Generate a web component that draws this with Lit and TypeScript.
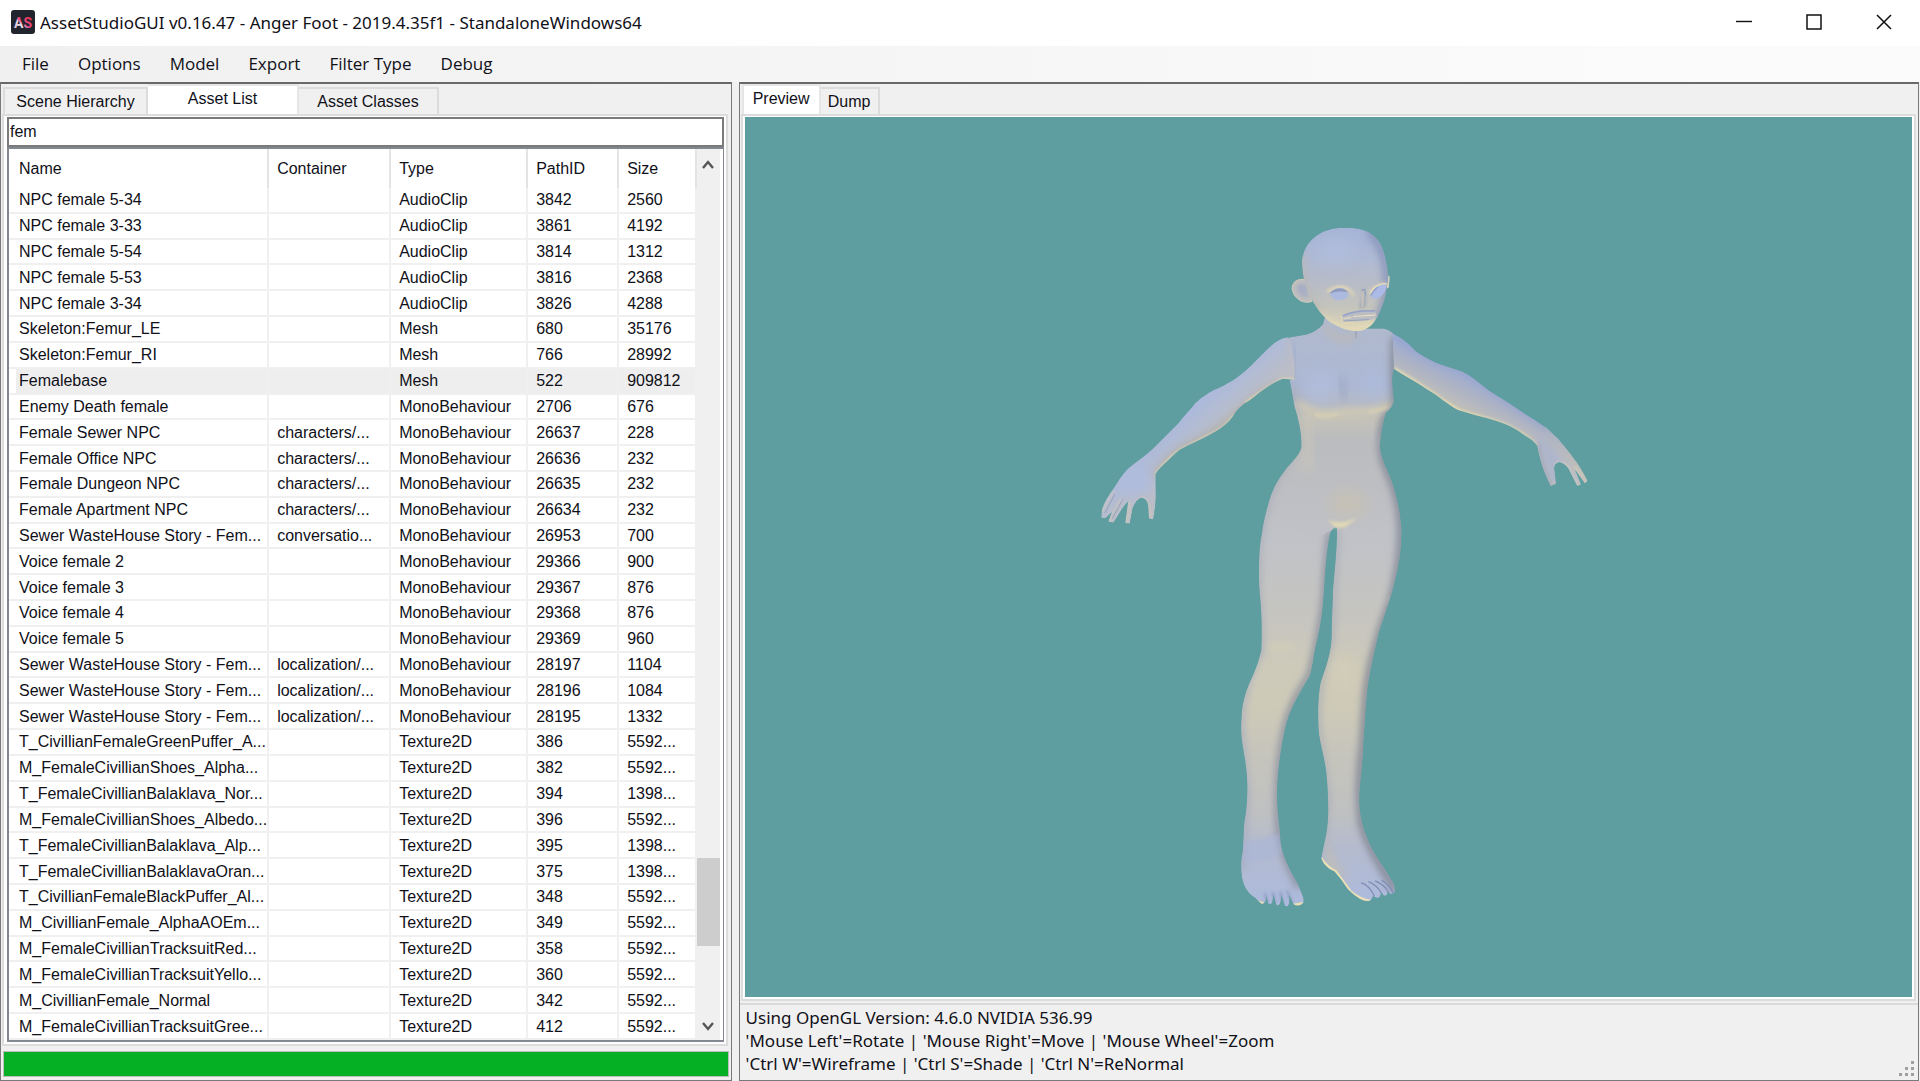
import { LitElement, html, css, svg } from "lit";
import { customElement, state } from "lit/decorators.js";
import { classMap } from "lit/directives/class-map.js";

type Asset = [name: string, container: string, type: string, pathId: string, size: string];

const MONO = "MonoBehaviour";
const ASSETS: Asset[] = [
  ["NPC female 5-34", "", "AudioClip", "3842", "2560"],
  ["NPC female 3-33", "", "AudioClip", "3861", "4192"],
  ["NPC female 5-54", "", "AudioClip", "3814", "1312"],
  ["NPC female 5-53", "", "AudioClip", "3816", "2368"],
  ["NPC female 3-34", "", "AudioClip", "3826", "4288"],
  ["Skeleton:Femur_LE", "", "Mesh", "680", "35176"],
  ["Skeleton:Femur_RI", "", "Mesh", "766", "28992"],
  ["Femalebase", "", "Mesh", "522", "909812"],
  ["Enemy Death female", "", MONO, "2706", "676"],
  ["Female Sewer NPC", "characters/...", MONO, "26637", "228"],
  ["Female Office NPC", "characters/...", MONO, "26636", "232"],
  ["Female Dungeon NPC", "characters/...", MONO, "26635", "232"],
  ["Female Apartment NPC", "characters/...", MONO, "26634", "232"],
  ["Sewer WasteHouse Story - Fem...", "conversatio...", MONO, "26953", "700"],
  ["Voice female 2", "", MONO, "29366", "900"],
  ["Voice female 3", "", MONO, "29367", "876"],
  ["Voice female 4", "", MONO, "29368", "876"],
  ["Voice female 5", "", MONO, "29369", "960"],
  ["Sewer WasteHouse Story - Fem...", "localization/...", MONO, "28197", "1104"],
  ["Sewer WasteHouse Story - Fem...", "localization/...", MONO, "28196", "1084"],
  ["Sewer WasteHouse Story - Fem...", "localization/...", MONO, "28195", "1332"],
  ["T_CivillianFemaleGreenPuffer_A...", "", "Texture2D", "386", "5592..."],
  ["M_FemaleCivillianShoes_Alpha...", "", "Texture2D", "382", "5592..."],
  ["T_FemaleCivillianBalaklava_Nor...", "", "Texture2D", "394", "1398..."],
  ["M_FemaleCivillianShoes_Albedo...", "", "Texture2D", "396", "5592..."],
  ["T_FemaleCivillianBalaklava_Alp...", "", "Texture2D", "395", "1398..."],
  ["T_FemaleCivillianBalaklavaOran...", "", "Texture2D", "375", "1398..."],
  ["T_CivillianFemaleBlackPuffer_Al...", "", "Texture2D", "348", "5592..."],
  ["M_CivillianFemale_AlphaAOEm...", "", "Texture2D", "349", "5592..."],
  ["M_FemaleCivillianTracksuitRed...", "", "Texture2D", "358", "5592..."],
  ["M_FemaleCivillianTracksuitYello...", "", "Texture2D", "360", "5592..."],
  ["M_CivillianFemale_Normal", "", "Texture2D", "342", "5592..."],
  ["M_FemaleCivillianTracksuitGree...", "", "Texture2D", "412", "5592..."],
];

/* Outlines of the mesh, one closed path for each shaded part. */
const HEAD =
  "M667 150C672 118 685 98 700 85C728 60 762 52 800 53C835 53 860 60 880 75C905 95 912 122 918 150C926 180 926 215 919 245C915 275 903 300 892 322C880 345 862 360 840 362C820 364 800 360 780 351C760 343 745 333 732 318C715 300 703 282 694 262C680 240 668 205 667 150Z";
const TORSO =
  "M735 322L730 342Q710 364 680 373L615 384Q640 430 645 505L630 509Q638 550 645 590Q668 660 665 712C658 738 632 757 616 780C596 806 584 828 577 848C570 868 566 884 562 900L700 990L765 952L900 960L960 912C953 865 938 810 920 775C905 740 900 720 901 700C904 670 908 640 918 608Q940 590 942 570Q938 540 937 500L942 475L942 372Q930 358 910 355L860 355L828 362L800 330Z";
const LEFT_LEG =
  "M577 848C563 885 552 930 546 975C538 1010 537 1080 539 1130C546 1200 548 1260 545 1320C535 1360 522 1390 512 1412C495 1450 487 1485 486 1520C480 1580 494 1620 498 1660C504 1700 504 1740 502 1770C500 1810 494 1830 493 1850L490 1920C483 1950 483 1990 490 2012C496 2035 510 2050 525 2060L545 2078Q562 2080 560 2055L566 2078Q580 2088 581 2050L590 2082Q606 2090 604 2050L616 2086Q634 2090 628 2052L642 2080Q660 2090 672 2073C674 2060 665 2045 655 2020C635 1985 620 1960 608 1920C600 1890 602 1860 598 1840C594 1800 590 1760 593 1720C595 1680 600 1640 606 1605C612 1570 618 1540 628 1512C645 1470 670 1430 690 1395C700 1365 700 1340 708 1305C722 1250 730 1200 734 1120C738 1060 742 1010 752 965L765 950L780 850Z";
const RIGHT_LEG =
  "M772 955C772 1030 762 1100 760 1140C758 1200 756 1240 756 1275C755 1330 735 1380 723 1415C714 1460 714 1530 718 1570C724 1610 734 1640 739 1680C746 1740 746 1800 745 1820C743 1870 730 1910 725 1942Q735 1970 765 1982Q785 2005 805 2035Q830 2060 850 2068Q875 2076 880 2055L888 2060Q902 2066 904 2045L912 2054Q924 2058 924 2040L932 2050L944 2046Q948 2030 940 2015C920 1980 890 1940 870 1900C858 1870 850 1855 846 1830C836 1790 838 1760 840 1730C845 1680 850 1640 851 1590C856 1540 856 1500 861 1455C865 1400 885 1320 896 1270C915 1210 935 1160 948 1100C960 1050 966 1000 965 960C963 920 955 880 944 845L765 850L765 945Z";
const LEFT_ARM =
  "M625 381C600 383 580 400 563 417L515 465C490 490 460 512 440 521C420 533 402 538 390 546C370 560 350 572 338 590C325 605 310 620 295 640L220 715C195 738 165 758 145 776C128 792 115 815 104 832C88 852 72 880 67 900L65 922L78 923L97 905L86 934L102 937L125 900Q138 880 146 873L137 938L151 940L160 892Q170 868 184 862Q202 862 206 885L208 924L221 927Q230 880 229 850L228 790C240 772 252 762 265 750Q285 730 300 718C330 702 370 685 410 662Q440 645 460 618Q475 590 510 570C540 545 580 515 610 505L645 508C648 460 642 420 625 381Z";
const RIGHT_ARM =
  "M938 370C960 380 980 395 990 405C1010 428 1040 445 1080 462C1105 470 1130 478 1150 485C1175 498 1190 512 1205 523C1230 545 1260 560 1290 580C1325 605 1360 625 1390 646C1410 658 1420 672 1435 685C1450 705 1468 722 1480 742Q1500 765 1523 812L1515 819L1484 776L1503 822L1492 827L1466 775Q1450 755 1437 755Q1420 760 1423 778L1428 820L1412 827Q1390 780 1382 750Q1375 725 1372 705Q1355 685 1335 675C1300 650 1280 642 1250 632C1210 620 1170 610 1135 599C1100 580 1080 560 1050 542C1020 520 980 500 942 475Z";
const EAR = "M688 212Q665 202 648 213Q632 228 640 245Q645 262 668 274Q685 278 697 273Z";

/* The hip contours run through both the torso and the legs, so their shading is shared. */
const HIP_RIGHT = "M906 690Q904 745 928 790C975 900 975 1010 935 1170";
const HIP_LEFT = "M663 705Q590 790 568 870C540 950 530 1030 540 1200";

const figure = svg`
  <defs>
    <linearGradient id="gHead" x1="0" y1="0" x2="0" y2="1">
      <stop offset="0" stop-color="#a6b4d8"/><stop offset=".3" stop-color="#afbad4"/>
      <stop offset=".55" stop-color="#b8bcc6"/><stop offset=".78" stop-color="#c6c5bc"/><stop offset="1" stop-color="#ded6b6"/>
    </linearGradient>
    <linearGradient id="gTorso" gradientUnits="userSpaceOnUse" x1="0" y1="340" x2="0" y2="960">
      <stop offset="0" stop-color="#b0b9cd"/><stop offset=".3" stop-color="#adb8d3"/><stop offset=".4" stop-color="#b6bbc5"/>
      <stop offset=".46" stop-color="#c4c2b8"/><stop offset=".55" stop-color="#bbbcbe"/><stop offset=".75" stop-color="#bdbec2"/><stop offset="1" stop-color="#bfc1c6"/>
    </linearGradient>
    <linearGradient id="gLeg" gradientUnits="userSpaceOnUse" x1="0" y1="850" x2="0" y2="2080">
      <stop offset="0" stop-color="#bec0c4"/><stop offset=".12" stop-color="#c0c2c7"/><stop offset=".3" stop-color="#c6c5c0"/>
      <stop offset=".42" stop-color="#cdcaba"/><stop offset=".52" stop-color="#cecab8"/><stop offset=".65" stop-color="#c5c4bc"/>
      <stop offset=".78" stop-color="#bfc0c2"/><stop offset=".86" stop-color="#b4bbce"/><stop offset="1" stop-color="#adbadd"/>
    </linearGradient>
    <linearGradient id="gArmL" gradientUnits="userSpaceOnUse" x1="330" y1="580" x2="410" y2="670">
      <stop offset="0" stop-color="#aab8de"/><stop offset=".55" stop-color="#b3bcd2"/><stop offset="1" stop-color="#bcbec6"/>
    </linearGradient>
    <linearGradient id="gArmR" gradientUnits="userSpaceOnUse" x1="1200" y1="510" x2="1150" y2="610">
      <stop offset="0" stop-color="#9fadd3"/><stop offset=".45" stop-color="#adb3c4"/><stop offset="1" stop-color="#c4c1b7"/>
    </linearGradient>
    <filter id="b4" color-interpolation-filters="sRGB" x="-30%" y="-30%" width="160%" height="160%"><feGaussianBlur stdDeviation="4"/></filter>
    <filter id="b10" color-interpolation-filters="sRGB" x="-50%" y="-50%" width="200%" height="200%"><feGaussianBlur stdDeviation="11"/></filter>
    <filter id="b22" color-interpolation-filters="sRGB" x="-80%" y="-80%" width="260%" height="260%"><feGaussianBlur stdDeviation="22"/></filter>
    <clipPath id="cHead"><path d=${HEAD}/></clipPath>
    <clipPath id="cTorso"><path d=${TORSO}/></clipPath>
    <clipPath id="cLL"><path d=${LEFT_LEG}/></clipPath>
    <clipPath id="cRL"><path d=${RIGHT_LEG}/></clipPath>
    <clipPath id="cLA"><path d=${LEFT_ARM}/></clipPath>
    <clipPath id="cRA"><path d=${RIGHT_ARM}/></clipPath>
  </defs>

  <g clip-path="url(#cLL)" fill="none">
    <path d=${LEFT_LEG} fill="url(#gLeg)"/>
    <path d="M752 965C738 1060 738 1160 728 1210C715 1290 705 1340 690 1395C660 1440 630 1490 615 1560C600 1640 590 1720 598 1850Q605 1930 660 2030" stroke="#8b909f" stroke-width="20" filter="url(#b10)"/>
    <path d=${HIP_LEFT} stroke="#a8acb9" stroke-width="14" filter="url(#b10)"/>
    <path d="M540 1200L545 1320Q490 1420 484 1540L502 1760L486 1980" stroke="#a5abbe" stroke-width="14" filter="url(#b10)"/>
    <ellipse cx="605" cy="1310" rx="45" ry="14" fill="#d8d2b6" opacity=".5" filter="url(#b10)"/>
    <path d="M492 1890Q545 1885 598 1868L610 1920Q570 1960 490 1950Z" fill="#a8b5d9" opacity=".5" filter="url(#b4)"/>
    <path d="M500 2045Q525 2075 552 2078M640 2083L672 2078" stroke="#eadfae" stroke-width="9"/>
    <path d="M556 2046L562 2075M580 2044L586 2076M602 2042L610 2078M622 2038L636 2074" stroke="#8793b8" stroke-width="5" filter="url(#b4)"/>
  </g>
  <g clip-path="url(#cRL)" fill="none">
    <path d=${RIGHT_LEG} fill="url(#gLeg)"/>
    <path d=${HIP_RIGHT} stroke="#868c9a" stroke-width="24" filter="url(#b10)"/>
    <path d="M935 1170C890 1290 865 1380 858 1480L850 1600Q832 1740 846 1840Q870 1920 950 2040" stroke="#868b98" stroke-width="24" filter="url(#b10)"/>
    <path d="M772 960L756 1290Q712 1420 716 1540L744 1760L728 1930" stroke="#a5a9b5" stroke-width="12" filter="url(#b10)"/>
    <ellipse cx="790" cy="1390" rx="26" ry="60" fill="#d8d1b6" opacity=".6" filter="url(#b22)"/>
    <path d="M740 1860Q760 1960 820 2010L735 1970Z" fill="#bcbcbb" filter="url(#b10)"/>
    <path d="M724 1942Q740 1968 768 1982Q790 2010 812 2042Q850 2072 878 2070" stroke="#eae0b4" stroke-width="8"/>
    <path d="M844 2015Q868 2022 884 2056M866 2012Q892 2022 906 2048M886 2010Q912 2020 926 2044M906 2008Q930 2022 940 2046" stroke="#7f8db8" stroke-width="4"/>
  </g>

  <g clip-path="url(#cTorso)" fill="none">
    <path d=${TORSO} fill="url(#gTorso)"/>
    <path d="M946 380L942 520L948 570Q906 620 906 690" stroke="#868c9a" stroke-width="24" filter="url(#b10)"/>
    <path d=${HIP_RIGHT} stroke="#868c9a" stroke-width="24" filter="url(#b10)"/>
    <path d="M640 520Q660 620 663 705" stroke="#a8acb9" stroke-width="12" filter="url(#b10)"/>
    <path d=${HIP_LEFT} stroke="#a8acb9" stroke-width="14" filter="url(#b10)"/>
    <ellipse cx="722" cy="525" rx="44" ry="50" fill="#b2bfe0" opacity=".6" filter="url(#b22)"/>
    <ellipse cx="880" cy="520" rx="36" ry="46" fill="#aebcdf" opacity=".6" filter="url(#b22)"/>
    <path d="M785 500Q782 540 798 565" stroke="#98a4c0" stroke-width="20" opacity=".5" filter="url(#b10)"/>
    <path d="M652 575Q680 606 740 612Q800 602 860 602Q900 600 935 580" stroke="#d4ccb2" stroke-width="18" filter="url(#b10)"/>
    <path d="M705 612Q740 622 775 610M865 606Q905 600 922 590" stroke="#ded4b2" stroke-width="5" filter="url(#b4)"/>
    <path d="M655 600Q690 690 680 780" stroke="#ccc8ba" stroke-width="30" opacity=".8" filter="url(#b22)"/>
    <path d="M735 350Q770 388 800 388L828 372" stroke="#b9b9bb" stroke-width="22" filter="url(#b10)"/>
    <path d="M828 362L830 382" stroke="#8c92a2" stroke-width="6" filter="url(#b4)"/>
    <path d="M642 400Q650 450 646 500" stroke="#a2adca" stroke-width="6" filter="url(#b4)"/>
  </g>
  <ellipse cx="805" cy="880" rx="60" ry="40" fill="#cac2ae" opacity=".65" filter="url(#b22)"/>
  <path d="M742 925Q775 948 835 920L795 950L768 952Z" fill="#e2d9b4" filter="url(#b4)"/>

  <g clip-path="url(#cLA)" fill="none">
    <path d=${LEFT_ARM} fill="url(#gArmL)"/>
    <ellipse cx="165" cy="810" rx="60" ry="50" fill="#b0bcdd" filter="url(#b22)"/>
    <path d="M600 520Q520 560 455 625Q420 660 300 720Q250 760 228 800" stroke="#b2afaa" stroke-width="20" filter="url(#b10)"/>
    <path d="M645 508L610 508Q540 548 500 579M465 616Q440 652 410 666L300 723Q260 754 230 794" stroke="#eadeb0" stroke-width="8" filter="url(#b4)"/>
    <path d="M625 385Q642 440 640 500" stroke="#bcbdc8" stroke-width="16" filter="url(#b10)"/>
    <path d="M65 905L104 842M90 930L126 865M142 935L150 872M180 862Q205 855 212 920" stroke="#d6ceb8" stroke-width="4" filter="url(#b4)"/>
    <path d="M76 908L106 850M98 925L130 866" stroke="#98a2bc" stroke-width="3"/>
  </g>
  <g clip-path="url(#cRA)" fill="none">
    <path d=${RIGHT_ARM} fill="url(#gArmR)"/>
    <path d="M945 372Q1010 432 1080 458L1150 482L1290 576L1400 650" stroke="#94a3cf" stroke-width="14" filter="url(#b10)"/>
    <path d="M1370 660L1520 820L1410 820L1374 710Z" fill="#adb5cc" filter="url(#b10)"/>
    <path d="M942 477Q1030 530 1085 570L1140 604L1250 636Q1320 659 1370 710" stroke="#eadeb0" stroke-width="12" filter="url(#b4)"/>
    <path d="M1424 765Q1440 745 1465 770L1494 822M1484 770L1516 816" stroke="#e0d6b8" stroke-width="4" filter="url(#b4)"/>
    <path d="M1376 700Q1385 760 1412 825" stroke="#9ba3bb" stroke-width="6" filter="url(#b4)"/>
  </g>

  <path d=${EAR} fill="#bfbebe" stroke="#cdc9bb" stroke-width="3"/>
  <path d="M684 225Q662 212 650 228Q650 246 668 258Q680 262 686 262Z" fill="#a9afc4" filter="url(#b4)"/>
  <path d="M926 196L930 200L927 232L920 236Z" fill="#d8d3c2"/>
  <g clip-path="url(#cHead)" fill="none">
    <path d=${HEAD} fill="url(#gHead)"/>
    <path d="M865 60Q915 110 922 200Q924 270 890 330" stroke="#8995ba" stroke-width="22" filter="url(#b10)"/>
    <path d="M666 130L668 215Q688 270 728 320" stroke="#b9b8b6" stroke-width="20" filter="url(#b10)"/>
    <ellipse cx="770" cy="120" rx="55" ry="38" fill="#b2bfde" opacity=".7" filter="url(#b22)"/>
    <path d="M715 305Q745 345 790 356Q840 368 890 330" stroke="#e8deb8" stroke-width="14" filter="url(#b10)"/>
    <path d="M742 246Q755 228 790 230Q815 236 822 258M868 250Q885 224 918 220" stroke="#ddd3b8" stroke-width="8" filter="url(#b4)"/>
    <path d="M750 250Q762 232 785 234Q804 240 806 256Q796 272 772 270Q756 266 750 250Z" fill="#acbadf"/>
    <path d="M750 250Q762 233 785 235Q800 238 804 246Q776 240 750 250Z" fill="#8f9bbc"/>
    <path d="M748 246Q765 228 790 230L806 238" stroke="#dfd5b8" stroke-width="3"/>
    <path d="M872 256Q878 232 900 224Q916 218 920 228Q914 256 894 264Q876 268 872 256Z" fill="#acbbe6"/>
    <path d="M872 250Q880 230 900 223Q914 218 922 222" stroke="#e6dcb8" stroke-width="4"/>
    <path d="M874 256Q882 238 896 230" stroke="#8b98bb" stroke-width="3"/>
    <path d="M850 236Q862 262 856 292L838 294Q846 262 850 236Z" fill="#9ea6ba" filter="url(#b4)"/>
    <path d="M848 246Q852 268 846 292" stroke="#ded4b6" stroke-width="6" filter="url(#b4)"/>
    <path d="M845 240L855 237L858 256" stroke="#8c99ba" stroke-width="3"/>
    <path d="M786 322Q790 312 815 308L840 300Q872 298 888 304Q892 318 876 328Q840 334 788 334Z" fill="#bbbdc4"/>
    <path d="M788 317Q815 305 850 302L886 302" stroke="#97a4c8" stroke-width="5"/>
    <path d="M820 319L888 314M792 325L815 322" stroke="#ebe1bc" stroke-width="3"/>
    <path d="M790 332L868 328" stroke="#9aa3bc" stroke-width="3"/>
    <path d="M786 316L790 336L824 339" stroke="#e4dab6" stroke-width="3"/>
  </g>`;

@customElement("app-root")
export class AppRoot extends LitElement {
  @state() private selected = 7;

  static styles = css`
    :host {
      display: flex;
      flex-direction: column;
      min-height: 100vh;
      background: #f0f0f0;
      color: #101018;
      font-family: "Liberation Sans", Arial, sans-serif;
      font-size: 16px;
      line-height: 20px;
    }
    * { box-sizing: border-box; }
    button { border: 0; margin: 0; padding: 0; background: none; color: inherit; font: inherit; }

    .title { display: flex; align-items: center; height: 46px; padding: 0 1px 2px 11px; background: #fff; }
    .logo { width: 24px; height: 24px; margin-right: 5px; }
    .title h1 { flex: 1; margin: 0; padding-top: 2px; font-family: "Noto Sans", "Open Sans", sans-serif; font-size: 17px; font-weight: 400; white-space: nowrap; }
    .win { display: flex; width: 70px; height: 44px; align-items: center; justify-content: center; }
    .win svg { width: 16px; height: 16px; }

    .menu { display: flex; align-items: center; height: 36px; padding-left: 8px; background: linear-gradient(90deg, #f0f0f0, #fbfbfb 90%); font-family: "Open Sans", "Noto Sans", sans-serif; font-size: 17px; }
    .menu button { height: 36px; padding: 0 15px 0 14px; white-space: nowrap; }

    .split { flex: 1; display: grid; grid-template-columns: minmax(0, 732fr) minmax(0, 1181fr); column-gap: 7px; padding-right: 1px; }
    .pane { display: flex; flex-direction: column; border: 1px solid #7a7a7a; border-top: 2px solid #696969; }

    .tabs { display: flex; align-items: flex-end; height: 30px; padding: 0 2px; }
    .tab { height: 27px; border: 2px solid #dcdcdc; border-bottom: 0; background: #f0f0f0; white-space: nowrap; }
    .tab + .tab { border-left-width: 0; }
    .tab.on { height: 30px; background: #fff; border-color: #e6e6e6; padding-bottom: 2px; }
    .w145 { width: 145px; }
    .w151 { width: 151px; }
    .w140 { width: 140px; }
    .w79 { width: 79px; }
    .w59 { width: 59px; }

    .page { flex: 1; display: flex; flex-direction: column; margin: 0 3px 0 1px; border: 2px solid #dcdcdc; padding: 1px 2px 2px 3px; background: #fff; }
    .search { width: 100%; height: 30px; border: 2px solid #7a7a7a; border-radius: 0; padding: 0 1px; outline: 0; background: #fff; color: inherit; font: inherit; }
    .list { flex: 1; display: flex; border: 2px solid #828790; border-right-width: 1px; padding-right: 3px; }
    table { flex: 1; min-width: 0; border-collapse: separate; border-spacing: 0; table-layout: fixed; }
    .c1 { width: 260px; }
    .c2 { width: 122px; }
    .c3 { width: 137px; }
    .c4 { width: 91px; }
    th, td { padding: 0 0 0 8px; text-align: left; font-weight: 400; white-space: nowrap; overflow: hidden; border-right: 2px solid #f0f0f0; }
    th:first-child, td:first-child { padding-left: 10px; }
    th { height: 39px; padding-top: 1px; border-right-color: #e4e4e4; }
    td { padding-top: 1px; border-bottom: 2px solid #f0f0f0; line-height: 18px; }
    .sel td { background: #eee; }
    .sel td:first-child { background: linear-gradient(90deg, #fff 7px, #eee 7px); }
    .bar { display: grid; grid-template-rows: 31px 678px 88px 1fr 28px; width: 23px; background: #f0f0f0; }
    .bar button { display: flex; align-items: center; justify-content: center; }
    .bar svg { width: 12px; height: 12px; }
    .thumb { grid-row: 3; background: #cdcdcd; }
    .down { grid-row: 5; }

    .progress { height: 26px; margin: 5px 2px 3px 2px; border: 1px solid #bcbcbc; background: #06b025; }

    .page.view { margin-right: 2px; padding: 1px 2px 2px 2px; }
    .canvas { flex: 1; background: #5f9ea0; display: flex; min-height: 0; }
    .canvas svg { flex: 1; min-width: 0; width: 100%; display: block; }
    .info { position: relative; border-top: 2px solid #dadada; margin-top: 2px; padding: 1px 0 5px 6px; font-family: "Noto Sans", "Open Sans", sans-serif; font-size: 17px; line-height: 23px; }
    .info p { margin: 0; white-space: nowrap; }
    .grip { position: absolute; right: 3px; bottom: 3px; width: 16px; height: 16px; }

    .behind { height: 2px; overflow: hidden; background: #707070; }
    .behind i { display: block; width: 28px; height: 2px; background: #7a4a20; }
  `;

  private tab(label: string, size: string, on = false) {
    return html`<button role="tab" aria-selected=${on} class="tab ${size} ${on ? "on" : ""}">${label}</button>`;
  }

  render() {
    return html`
      <header class="title">
        <svg class="logo" viewBox="0 0 24 24" aria-hidden="true">
          <defs>
            <linearGradient id="as" x1="0" y1="1" x2="1" y2="0"><stop offset="0" stop-color="#c9b8e0"/><stop offset=".4" stop-color="#eadfe8"/><stop offset=".5" stop-color="#e84a8a"/><stop offset="1" stop-color="#f5303c"/></linearGradient>
          </defs>
          <rect width="24" height="24" rx="3" fill="#22252e"/>
          <text x="12" y="18" text-anchor="middle" font-family="Roboto, sans-serif" font-weight="700" font-size="14" fill="url(#as)">AS</text>
        </svg>
        <h1>AssetStudioGUI v0.16.47 - Anger Foot - 2019.4.35f1 - StandaloneWindows64</h1>
        <button class="win" aria-label="Minimize"><svg viewBox="0 0 16 16"><path d="M0 7.5H16" stroke="#111" stroke-width="1.4"/></svg></button>
        <button class="win" aria-label="Maximize"><svg viewBox="0 0 16 16"><path d="M1 1H15V15H1Z" fill="none" stroke="#111" stroke-width="1.5"/></svg></button>
        <button class="win" aria-label="Close"><svg viewBox="0 0 16 16"><path d="M1 1L15 15M15 1L1 15" stroke="#111" stroke-width="1.5"/></svg></button>
      </header>
      <nav class="menu">
        ${["File", "Options", "Model", "Export", "Filter Type", "Debug"].map((m) => html`<button>${m}</button>`)}
      </nav>
      <main class="split">
        <section class="pane">
          <div class="tabs" role="tablist">
            ${this.tab("Scene Hierarchy", "w145")}${this.tab("Asset List", "w151", true)}${this.tab("Asset Classes", "w140")}
          </div>
          <div class="page">
            <input class="search" type="text" aria-label="Filter" .value=${"fem"} />
            <div class="list">
              <table>
                <colgroup><col class="c1" /><col class="c2" /><col class="c3" /><col class="c4" /><col /></colgroup>
                <thead>
                  <tr>${["Name", "Container", "Type", "PathID", "Size"].map((h) => html`<th scope="col">${h}</th>`)}</tr>
                </thead>
                <tbody>
                  ${ASSETS.map(
                    (a, i) => html`<tr class=${classMap({ sel: i === this.selected })} @click=${() => (this.selected = i)}>
                      ${a.map((v) => html`<td>${v}</td>`)}
                    </tr>`
                  )}
                </tbody>
              </table>
              <div class="bar">
                <button aria-label="Scroll up"><svg viewBox="0 0 12 12"><path d="M1 9L6 3L11 9" fill="none" stroke="#555" stroke-width="2.4"/></svg></button>
                <div class="thumb"></div>
                <button class="down" aria-label="Scroll down"><svg viewBox="0 0 12 12"><path d="M1 3L6 9L11 3" fill="none" stroke="#555" stroke-width="2.4"/></svg></button>
              </div>
            </div>
          </div>
          <div class="progress" role="progressbar" aria-label="Progress" aria-valuenow="100"></div>
        </section>
        <section class="pane">
          <div class="tabs" role="tablist">${this.tab("Preview", "w79", true)}${this.tab("Dump", "w59")}</div>
          <div class="page view">
            <div class="canvas">
              <svg viewBox="-1002 -279 3498 2637" role="img" aria-label="Mesh preview">${figure}</svg>
            </div>
          </div>
          <div class="info">
            <p>Using OpenGL Version: 4.6.0 NVIDIA 536.99</p>
            <p>'Mouse Left'=Rotate | 'Mouse Right'=Move | 'Mouse Wheel'=Zoom</p>
            <p>'Ctrl W'=Wireframe | 'Ctrl S'=Shade | 'Ctrl N'=ReNormal</p>
            <svg class="grip" viewBox="0 0 16 16" aria-hidden="true">
              <path d="M12 0h3v3h-3zM6 6h3v3h-3zM12 6h3v3h-3zM0 12h3v3h-3zM6 12h3v3h-3zM12 12h3v3h-3z" fill="#a0a0a0"/>
            </svg>
          </div>
        </section>
      </main>
      <footer class="behind"><i></i></footer>
    `;
  }
}
